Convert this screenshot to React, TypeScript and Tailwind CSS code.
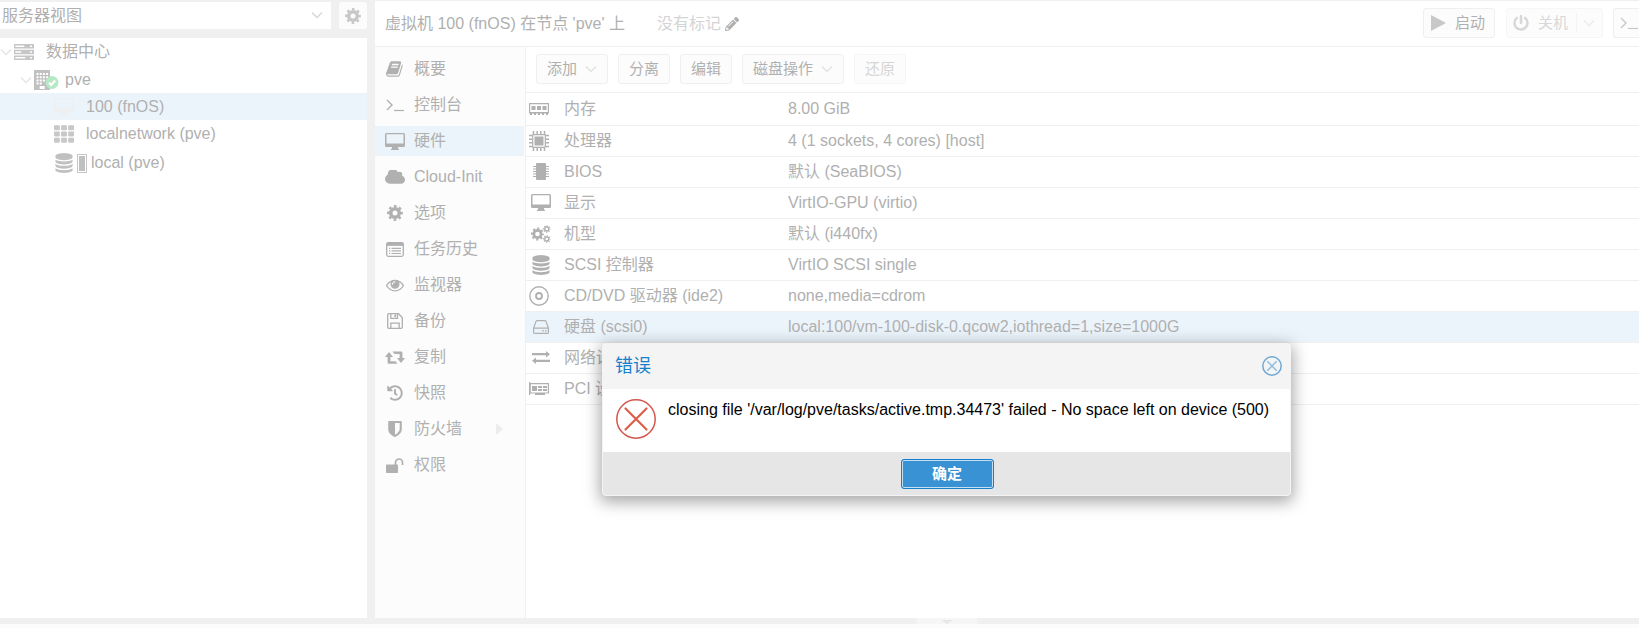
import { ReactNode, useState } from "react";
import clsx from "clsx";
import { FaHistory, FaPencilAlt, FaPowerOff, FaTh } from "react-icons/fa";

interface IconProps {
    className?: string;
}

interface RowProps {
    icon: ReactNode;
    name: string;
    value: string;
    wide?: boolean;
}

function Chevron({ className }: IconProps) {
    return (
        <svg viewBox="0 0 12 8" fill="none" stroke="currentColor" strokeWidth="1.5" className={clsx("w-3 h-2 shrink-0", className)}>
            <path d="M1 1.5l5 5 5-5" />
        </svg>
    );
}

function GearIcon() {
    return (
        <svg viewBox="0 0 16 16" fill="none" stroke="currentColor" className="size-4">
            <circle cx="8" cy="8" r="4.300" strokeWidth="3.600" />
            <circle cx="8" cy="8" r="6.700" strokeWidth="2.400" strokeDasharray="2.631" strokeDashoffset="1.315" />
        </svg>
    );
}

function CogsIcon() {
    return (
        <svg viewBox="0 0 20 18" fill="none" stroke="currentColor" className="w-5 h-[18px]">
            <circle cx="6.500" cy="9" r="3.700" strokeWidth="2.800" />
            <circle cx="6.500" cy="9" r="5.600" strokeWidth="1.800" strokeDasharray="2.199" strokeDashoffset="1.1" />
            <circle cx="15.800" cy="4" r="2" strokeWidth="1.400" />
            <circle cx="15.800" cy="4" r="3.200" strokeWidth="1.200" strokeDasharray="1.257" strokeDashoffset=".63" />
            <circle cx="15.800" cy="14" r="2" strokeWidth="1.400" />
            <circle cx="15.800" cy="14" r="3.200" strokeWidth="1.200" strokeDasharray="1.257" strokeDashoffset=".63" />
        </svg>
    );
}

function BookIcon() {
    return (
        <svg viewBox="0 0 1792 1792" fill="currentColor" className="size-[18px]">
            <path d="M1639 478q40 57 18 129l-275 906q-19 64-76.5 107.5t-122.5 43.5h-923q-77 0-148.5-53.5t-99.5-131.5q-24-67-2-127 0-4 3-27t4-37q1-8-3-21.5t-3-19.5q2-11 8-21t16.5-23.5 16.5-23.5q23-38 45-91.5t30-91.5q3-10 .5-30t-.5-28q3-11 17-28t17-23q21-36 42-92t25-90q1-9-2.5-32t.5-28q4-13 22-30.5t22-22.5q19-26 42.5-84.5t27.5-96.5q1-8-3-25.5t-2-26.5q2-8 9-18t18-23 17-21q8-12 16.5-30.5t15-35 16-36 19.5-32 26.5-23.5 36-11.5 47.5 5.5l-1 3q38-9 51-9h761q74 0 114 56t18 130l-274 906q-36 119-71.5 153.5t-128.5 34.5h-869q-27 0-38 15-11 16-1 43 24 70 144 70h923q29 0 56-15.5t35-41.5l300-987q7-22 5-57 38 15 59 43zm-1064 2q-4 13 2 22.5t20 9.5h608q13 0 25.5-9.5t16.5-22.5l21-64q4-13-2-22.5t-20-9.5h-608q-13 0-25.5 9.5t-16.5 22.5zm-83 256q-4 13 2 22.5t20 9.5h608q13 0 25.5-9.5t16.5-22.5l21-64q4-13-2-22.5t-20-9.5h-608q-13 0-25.5 9.5t-16.5 22.5z" />
        </svg>
    );
}

function DatabaseIcon() {
    return (
        <svg viewBox="0 0 1792 1792" fill="currentColor" className="size-5">
            <path d="M896 768q237 0 443-43t325-127v170q0 69-103 128t-280 93.500-385 34.500-385-34.500-280-93.500-103-128v-170q119 84 325 127t443 43zm0 768q237 0 443-43t325-127v170q0 69-103 128t-280 93.500-385 34.500-385-34.500-280-93.500-103-128v-170q119 84 325 127t443 43zm0-384q237 0 443-43t325-127v170q0 69-103 128t-280 93.500-385 34.500-385-34.500-280-93.500-103-128v-170q119 84 325 127t443 43zm0-1152q208 0 385 34.500t280 93.500 103 128v128q0 69-103 128t-280 93.500-385 34.500-385-34.500-280-93.500-103-128v-128q0-69 103-128t280-93.500 385-34.500z" />
        </svg>
    );
}

function EyeIcon() {
    return (
        <svg viewBox="0 0 1792 1792" fill="currentColor" className="size-[18px]">
            <path d="M1664 960q-152-236-381-353 61 104 61 225 0 185-131.5 316.5t-316.5 131.5-316.5-131.5-131.5-316.5q0-121 61-225-229 117-381 353 133 205 333.5 326.5t434.5 121.500 434.500-121.500 333.500-326.500zm-720-384q0-20-14-34t-34-14q-125 0-214.500 89.500t-89.500 214.500q0 20 14 34t34 14 34-14 14-34q0-86 61-147t147-61q20 0 34-14t14-34zm848 384q0 34-20 69-140 230-376.500 368.500t-499.500 138.500-499.500-139-376.500-368q-20-35-20-69t20-69q140-229 376.500-368t499.500-139 499.500 139 376.500 368q20 35 20 69z" />
        </svg>
    );
}

function CloudIcon() {
    return (
        <svg viewBox="64 256 1920 1280" fill="currentColor" className="w-5 h-[14px]">
            <path d="M1984 1152q0 159-112.5 271.5t-271.5 112.5h-1088q-185 0-316.5-131.5t-131.5-316.5q0-132 71-241.5t187-163.5q-2-28-2-43 0-212 150-362t362-150q158 0 286.500 88t187.500 230q70-62 166-62 106 0 181 75t75 181q0 75-41 138 129 30 213 134.500t84 239.500z" />
        </svg>
    );
}

function TerminalIcon() {
    return (
        <svg viewBox="0 0 18 14" fill="none" stroke="currentColor" className="w-[18px] h-[14px] shrink-0">
            <path d="M1 2l5 5-5 5" strokeWidth="1.4" />
            <path d="M8 12.500h10" strokeWidth="1.200" />
        </svg>
    );
}

function DesktopIcon({ className }: IconProps) {
    return (
        <svg viewBox="0 0 20 17" fill="currentColor" className={clsx("w-5 h-[17px] shrink-0", className)}>
            <path fillRule="evenodd" d="M1.500 0h17A1.500 1.500 0 0 1 20 1.500v11a1.500 1.500 0 0 1-1.500 1.500H13v1.500l1 .500v1H6v-1l1-.500V14H1.500A1.500 1.500 0 0 1 0 12.500v-11A1.500 1.500 0 0 1 1.500 0zm0 1.300v9.200h17V1.300z" />
        </svg>
    );
}

function ListIcon() {
    return (
        <svg viewBox="0 0 18 15" fill="none" stroke="currentColor" className="w-[18px] h-[15px]">
            <rect x=".7" y=".7" width="16.600" height="13.600" rx="1.500" strokeWidth="1.300" />
            <path d="M.7 2.300h16.600" strokeWidth="3.200" />
            <path d="M3 6.300h1.300M3 8.900h1.300M3 11.500h1.300M5.500 6.300H15M5.500 8.900H15M5.500 11.500H15" strokeWidth="1.200" />
        </svg>
    );
}

function SaveIcon() {
    return (
        <svg viewBox="0 0 16 16" fill="none" stroke="currentColor" strokeWidth="1.300" className="size-4">
            <path d="M.7 1.700a1 1 0 0 1 1-1h9.800l3.800 3.800v9.800a1 1 0 0 1-1 1H1.700a1 1 0 0 1-1-1z" />
            <path d="M3.800.7v4.600h6.700V.7M3.800 15.300v-5.200h8.400v5.200" />
            <path d="M8.200 1.500v2.600" strokeWidth="1.800" />
        </svg>
    );
}

function RetweetIcon() {
    return (
        <svg viewBox="0 0 20 13" fill="currentColor" className="w-5 h-[13px]">
            <path d="M12.500 12.700H3.600a1 1 0 0 1-1-1V6H0l4-5 4 5H5.400v4.200h5.100zM7.500.5h8.900a1 1 0 0 1 1 1V7H20l-4 5-4-5h2.600V3H9.500z" />
        </svg>
    );
}

function ShieldIcon() {
    return (
        <svg viewBox="0 0 14 16" fill="currentColor" className="w-[14px] h-4">
            <path fillRule="evenodd" d="M1 0h12a.8.8 0 0 1 .8.8v7.400c0 3.600-3.400 6.300-6.800 7.800C3.600 14.500.2 11.800.2 8.200V.8A.8.800 0 0 1 1 0zm6 2v11.700c2.300-1.200 4.700-3.200 4.700-5.700V2z" />
        </svg>
    );
}

function UnlockIcon() {
    return (
        <svg viewBox="0 0 18 15" className="w-[18px] h-[15px]">
            <rect y="6.500" width="12" height="8.500" rx="1" fill="currentColor" />
            <path d="M9.500 7V4.500a3.500 3.500 0 0 1 7 0V7" fill="none" stroke="currentColor" strokeWidth="1.700" />
        </svg>
    );
}

function ServerIcon() {
    return (
        <svg viewBox="0 0 20 16" fill="currentColor" className="w-5 h-4 shrink-0">
            <path fillRule="evenodd" d="M0 0h20v4.500H0zM1.300 1.500v1.500h9V1.500zM16 1.500v1.500h2V1.500zM0 5.700h20v4.500H0zM1.300 7.200v1.500h6V7.200zM16 7.200v1.500h2V7.200zM0 11.500h20V16H0zM1.300 13v1.500h10V13zM16 13v1.500h2V13z" />
        </svg>
    );
}

function NodeIcon() {
    return (
        <svg viewBox="0 0 25 20" className="w-[25px] h-5 shrink-0">
            <rect width="16" height="20" fill="#c0c0c0" />
            <path d="M2.500 3h2v2h-2zM5.700 3h2v2h-2zM8.900 3h2v2h-2zM12.100 3h2v2h-2zM2.500 6.200h2v2h-2zM5.700 6.200h2v2h-2zM8.900 6.200h2v2h-2zM12.100 6.200h2v2h-2zM2.500 9.400h2v2h-2zM5.700 9.400h2v2h-2zM8.900 9.400h2v2h-2zM2.500 12.600h2v2h-2zM5.700 12.600h2v2h-2zM5.700 16h5v3h-5z" fill="#fff" />
            <circle cx="18" cy="12.500" r="6.500" fill="#b4e9c3" />
            <path d="M15 12.700l2.200 2.200 4-4.300" fill="none" stroke="#fff" strokeWidth="2.200" />
        </svg>
    );
}

function MemoryIcon() {
    return (
        <svg viewBox="0 0 20 12" fill="currentColor" className="w-5 h-3">
            <path fillRule="evenodd" d="M0 0h20v10.500h-1V12h-2v-1.500h-2V12h-2v-1.500h-2V12H9v-1.500H7V12H5v-1.500H3V12H1v-1.500H0zM1.200 1.200V9h17.600V1.200z" />
            <path d="M2.500 3h4v4h-4zM8 3h4v4H8zM13.500 3h4v4h-4z" />
        </svg>
    );
}

function CpuIcon() {
    return (
        <svg viewBox="0 0 20 20" fill="none" stroke="currentColor" className="size-5">
            <rect x="3.700" y="3.700" width="12.600" height="12.600" rx=".5" strokeWidth="1.200" />
            <rect x="5.500" y="5.500" width="9" height="9" fill="currentColor" stroke="none" />
            <path d="M4.500 0v3.500M8.200 0v3.500M11.800 0v3.500M15.500 0v3.500M4.500 16.500V20M8.200 16.500V20M11.800 16.500V20M15.500 16.500V20M0 4.500h3.500M0 8.200h3.500M0 11.800h3.500M0 15.500h3.500M16.500 4.500H20M16.500 8.200H20M16.500 11.800H20M16.500 15.500H20" strokeWidth="1.500" />
        </svg>
    );
}

function ChipIcon() {
    return (
        <svg viewBox="0 0 16 17" fill="none" stroke="currentColor" className="w-4 h-[17px]">
            <rect x="3" width="10" height="17" rx="1" fill="currentColor" stroke="none" />
            <path d="M0 3.500h16M0 6h16M0 8.500h16M0 11h16M0 13.500h16" strokeWidth="1.100" />
        </svg>
    );
}

function DiscIcon() {
    return (
        <svg viewBox="0 0 20 20" fill="none" stroke="currentColor" strokeWidth="1.400" className="size-5">
            <circle cx="10" cy="10" r="9.200" />
            <circle cx="10" cy="10" r="3" strokeWidth="1.800" />
        </svg>
    );
}

function HddIcon() {
    return (
        <svg viewBox="0 0 16 14" fill="none" stroke="currentColor" strokeWidth="1.200" className="w-4 h-[14px]">
            <path d="M.6 8.200L3 1.400Q3.300.6 4.200.6h7.600q.9 0 1.200.8l2.400 6.800v4.200q0 1-1 1H1.600q-1 0-1-1zh14.800" />
            <path d="M9.200 10.800h1.500M12 10.800h1.500" strokeWidth="1.500" />
        </svg>
    );
}

function ExchangeIcon() {
    return (
        <svg viewBox="0 0 18 13" fill="currentColor" className="w-[18px] h-[13px]">
            <path d="M0 2.100h14V0l4 3.200-4 3.200V4.300H0zM18 8.700H4V6.600L0 9.800 4 13v-2.100h14z" />
        </svg>
    );
}

function PciIcon() {
    return (
        <svg viewBox="0 0 20 13" fill="currentColor" className="w-5 h-[13px]">
            <path fillRule="evenodd" d="M0 0h1.200v1H20v10.500h-4V13H6v-1.500H1.200V13H0zM1.800 2.200v8.200h17V2.200z" />
            <path d="M3 4h5v5H3zM9 4h4v2H9zM14 4h4v2h-4zM9 7h4v2H9zM14 7h4v2h-4z" />
        </svg>
    );
}

const navItems = [
    { icon: <BookIcon />, label: "概要" },
    { icon: <TerminalIcon />, label: "控制台" },
    { icon: <DesktopIcon />, label: "硬件" },
    { icon: <CloudIcon />, label: "Cloud-Init" },
    { icon: <GearIcon />, label: "选项" },
    { icon: <ListIcon />, label: "任务历史" },
    { icon: <EyeIcon />, label: "监视器" },
    { icon: <SaveIcon />, label: "备份" },
    { icon: <RetweetIcon />, label: "复制" },
    { icon: <FaHistory />, label: "快照" },
    { icon: <ShieldIcon />, label: "防火墙" },
    { icon: <UnlockIcon />, label: "权限" },
];

const hardware: RowProps[] = [
    { icon: <MemoryIcon />, name: "内存", value: "8.00 GiB", wide: true },
    { icon: <CpuIcon />, name: "处理器", value: "4 (1 sockets, 4 cores) [host]", wide: true },
    { icon: <ChipIcon />, name: "BIOS", value: "默认 (SeaBIOS)" },
    { icon: <DesktopIcon />, name: "显示", value: "VirtIO-GPU (virtio)" },
    { icon: <CogsIcon />, name: "机型", value: "默认 (i440fx)" },
    { icon: <DatabaseIcon />, name: "SCSI 控制器", value: "VirtIO SCSI single" },
    { icon: <DiscIcon />, name: "CD/DVD 驱动器 (ide2)", value: "none,media=cdrom", wide: true },
    { icon: <HddIcon />, name: "硬盘 (scsi0)", value: "local:100/vm-100-disk-0.qcow2,iothread=1,size=1000G" },
    { icon: <ExchangeIcon />, name: "网络设", value: "" },
    { icon: <PciIcon />, name: "PCI 设", value: "", wide: true },
];

function ToolButton({ children, disabled }: { children: ReactNode; disabled?: boolean }) {
    return (
        <button
            disabled={disabled}
            className={clsx(
                "flex items-center h-[30px] px-[10px] rounded-[3px] border bg-[#fcfcfc] text-[15px]",
                disabled ? "border-[#f6f6f6] text-[#d6d6d6]" : "border-[#efefef]"
            )}
        >
            {children}
        </button>
    );
}

function Sidebar() {
    return (
        <aside className="flex flex-col w-[367px] shrink-0">
            <div className="flex gap-2 pb-[9px]">
                <div className="relative flex-1">
                    <select aria-label="视图" className="appearance-none w-full h-[27px] pt-px pl-[2px] bg-white outline-none">
                        <option>服务器视图</option>
                    </select>
                    <Chevron className="absolute right-2 top-[9px] text-[#d8d8d8] pointer-events-none" />
                </div>
                <button aria-label="设置" className="flex items-center justify-center w-7 h-[27px] rounded-[3px] bg-[#fcfcfc] text-[#c8c8c8]">
                    <GearIcon />
                </button>
            </div>
            <ul className="flex-1 bg-white">
                <li className="flex items-center h-7">
                    <Chevron className="text-[#e6e6e6]" />
                    <span className="ml-[2px] text-[#c6c6c6]"><ServerIcon /></span>
                    <span className="ml-3">数据中心</span>
                </li>
                <li className="flex items-center h-[27px] pl-5">
                    <Chevron className="text-[#e6e6e6]" />
                    <span className="ml-[2px]"><NodeIcon /></span>
                    <span className="ml-[6px]">pve</span>
                </li>
                <li className="flex items-center h-[27px] pl-[54px] bg-[#ecf4fb]">
                    <DesktopIcon className="text-[#eeeff0]" />
                    <span className="ml-3">100 (fnOS)</span>
                </li>
                <li className="flex items-center h-7 pl-[54px]">
                    <FaTh className="size-5 text-[#c8c8c8]" />
                    <span className="ml-3">localnetwork (pve)</span>
                </li>
                <li className="flex items-center h-[30px] pl-[54px]">
                    <span className="text-[#c0c0c0]"><DatabaseIcon /></span>
                    <span className="ml-[3px] w-[10px] h-[19px] border border-[#c6c6c6] p-px">
                        <span className="block h-full bg-[#c0c0c0]" />
                    </span>
                    <span className="ml-1">local (pve)</span>
                </li>
            </ul>
        </aside>
    );
}

function Header() {
    return (
        <header className="flex items-center h-[46px] pl-[10px] border-b border-[#efefef] bg-white">
            <h1>虚拟机 100 (fnOS) 在节点 'pve' 上</h1>
            <span className="ml-8 text-[#d4d4d4]">没有标记</span>
            <button aria-label="编辑标记" className="ml-1"><FaPencilAlt className="size-[14px]" /></button>
            <div className="flex ml-auto pb-[2px]">
                <button className="flex items-center w-[72px] h-[30px] px-[7px] rounded-[3px] border border-[#efefef] bg-[#fcfcfc] text-[15px]">
                    <svg viewBox="0 0 15 16" className="w-[15px] h-4" fill="#c8c8c8">
                        <path d="M0 0l15 8-15 8z" />
                    </svg>
                    <span className="ml-[9px]">启动</span>
                </button>
                <button disabled className="flex items-center w-[97px] h-[30px] ml-[11px] px-[6px] rounded-[3px] border border-[#f6f6f6] bg-[#fcfcfc] text-[15px] text-[#d8d8d8]">
                    <FaPowerOff className="size-4" />
                    <span className="ml-[9px]">关机</span>
                    <span className="w-px h-5 ml-2 bg-[#f4f4f4]" />
                    <Chevron className="ml-[6px] text-[#ececec]" />
                </button>
                <button aria-label="控制台" className="flex items-center w-[26px] h-[30px] ml-[10px] pl-[6px] rounded-l-[3px] border border-r-0 border-[#efefef] bg-[#fcfcfc] text-[#c8c8c8]">
                    <TerminalIcon />
                </button>
            </div>
        </header>
    );
}

function Nav() {
    return (
        <nav className="flex flex-col gap-[6px] w-[151px] shrink-0 pt-[7px] pr-px border-r border-[#efefef] bg-[#fcfcfc]">
            {navItems.map((item, i) => (
                <a key={item.label} href="#" className={clsx("flex items-center h-[30px] pl-[10px]", i === 2 && "bg-[#ecf4fb]")}>
                    <span className="flex justify-center w-5">{item.icon}</span>
                    <span className="ml-[9px]">{item.label}</span>
                    {item.label === "防火墙" && (
                        <svg viewBox="0 0 7 12" className="w-[7px] h-3 ml-auto mr-[21px]" fill="#ececec">
                            <path d="M0 0l7 6-7 6z" />
                        </svg>
                    )}
                </a>
            ))}
        </nav>
    );
}

function Hardware() {
    return (
        <main className="flex-1 min-w-0 bg-white">
            <div className="flex items-center gap-[10px] h-[46px] pl-[10px] pb-px border-b border-[#efefef]">
                <ToolButton>添加<Chevron className="ml-2 text-[#e2e2e2]" /></ToolButton>
                <ToolButton>分离</ToolButton>
                <ToolButton>编辑</ToolButton>
                <ToolButton>磁盘操作<Chevron className="ml-2 text-[#e2e2e2]" /></ToolButton>
                <ToolButton disabled>还原</ToolButton>
            </div>
            <table className="w-full mt-px">
                <tbody>
                    {hardware.map((row, i) => (
                        <tr key={row.name} className={clsx("h-[31px] border-b border-[#efefef]", i === 7 && "bg-[#ecf4fb]")}>
                            <td className="w-[262px] p-0">
                                <div className="flex items-center pl-[3px] whitespace-nowrap">
                                    <span className={clsx("flex w-6 shrink-0", !row.wide && "justify-center")}>{row.icon}</span>
                                    <span className="ml-[11px]">{row.name}</span>
                                </div>
                            </td>
                            <td className="p-0">{row.value}</td>
                        </tr>
                    ))}
                </tbody>
            </table>
        </main>
    );
}

function ErrorDialog({ onClose }: { onClose: () => void }) {
    return (
        <div
            role="alertdialog"
            aria-labelledby="dialog-title"
            className="absolute left-[602px] top-[343px] w-[689px] rounded-[4px] border border-[#f4f4f4] overflow-hidden bg-white text-black shadow-[0_4px_16px_2px_rgba(0,0,0,0.35)]"
        >
            <div className="flex items-center justify-between h-[45px] pb-[2px] pl-3 pr-2 bg-[#f4f4f4]">
                <h2 id="dialog-title" className="text-lg leading-6 text-[#157fcc]">错误</h2>
                <button aria-label="关闭" onClick={onClose}>
                    <svg viewBox="0 0 20 20" fill="none" className="size-5">
                        <circle cx="10" cy="10" r="9.200" stroke="#6fa8d4" strokeWidth="1.500" />
                        <path d="M5.300 5.300l9.400 9.400M14.700 5.300l-9.400 9.400" stroke="#8dbbe2" strokeWidth="1.500" />
                    </svg>
                </button>
            </div>
            <div className="flex h-[63px] pl-[13px] pt-[10px]">
                <svg viewBox="0 0 40 40" fill="none" className="size-10 shrink-0">
                    <circle cx="20" cy="20" r="19.200" stroke="#d4554b" strokeWidth="1.500" />
                    <path d="M9.500 9.500l21 21M30.500 9.500l-21 21" stroke="#dd5f4b" strokeWidth="2.200" strokeLinecap="round" />
                </svg>
                <p className="ml-3 leading-[22px] whitespace-nowrap">
                    closing file '/var/log/pve/tasks/active.tmp.34473' failed - No space left on device (500)
                </p>
            </div>
            <div className="flex justify-center h-[43px] pt-[7px] pl-px bg-[#e6e6e6]">
                <button
                    onClick={onClose}
                    className="w-[93px] h-[30px] rounded-[3px] border border-[#157fcc] bg-[#3892d4] text-[15px] font-bold text-white inset-ring-1 inset-ring-[#c4def2]"
                >
                    确定
                </button>
            </div>
        </div>
    );
}

export default function App() {
    const [open, setOpen] = useState(true);

    return (
        <div className="relative flex flex-col min-h-screen overflow-hidden bg-[#f0f0f0] text-base leading-6 text-[#b0b0b0] font-['Liberation_Sans','Noto_Sans_CJK_SC',sans-serif]">
            <div className="flex flex-1 gap-2">
                <div className="flex pt-[2px]">
                    <Sidebar />
                </div>
                <div className="flex flex-col flex-1 min-w-0 pt-px">
                    <Header />
                    <div className="flex flex-1">
                        <Nav />
                        <Hardware />
                    </div>
                </div>
            </div>
            <div className="relative h-[6px]">
                <button aria-label="展开日志" className="absolute left-[917px] top-0 flex justify-center w-[60px] h-[6px] bg-[#f6f6f6]">
                    <svg viewBox="0 0 12 4" className="w-3 h-1 mt-[2px]" fill="#e8e8e8">
                        <path d="M0 0h12L6 4z" />
                    </svg>
                </button>
            </div>
            <footer className="h-1 bg-[#fcfcfc]" />
            {open && <ErrorDialog onClose={() => setOpen(false)} />}
        </div>
    );
}
